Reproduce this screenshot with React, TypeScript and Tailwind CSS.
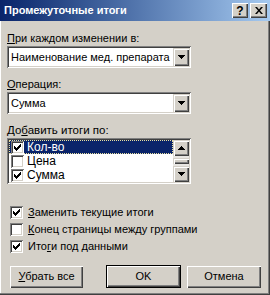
import React from "react";

const sunken =
  "shadow-[inset_1px_1px_0_#808080,inset_-1px_-1px_0_#ffffff,inset_2px_2px_0_#404040,inset_-2px_-2px_0_#d4d0c8]";
const raised =
  "shadow-[inset_1px_1px_0_#ffffff,inset_-1px_-1px_0_#404040,inset_-2px_-2px_0_#808080]";
const raisedCombo =
  "shadow-[inset_1px_1px_0_#d4d0c8,inset_2px_2px_0_#ffffff,inset_-1px_-1px_0_#404040,inset_-2px_-2px_0_#808080]";

function Check({ on }: { on: boolean }) {
  return (
    <div className={`w-[13px] h-[13px] bg-white shrink-0 relative ${sunken}`}>
      {on && (
        <svg className="absolute left-[3px] top-[3px]" width="7" height="7" viewBox="0 0 7 7">
          <path d="M0 2h1v1h1v1h1v-1h1v-1h1v-1h1v-1h1v3h-1v1h-1v1h-1v1h-1v1h-1v-1h-1v-1h-1z" fill="#000" />
        </svg>
      )}
    </div>
  );
}

function ArrowDown() {
  return (
    <svg width="7" height="4" viewBox="0 0 7 4">
      <path d="M0 0h7v1h-1v1h-1v1h-1v1h-1v-1h-1v-1h-1v-1h-1z" fill="#000" />
    </svg>
  );
}
function ArrowUp() {
  return (
    <svg width="7" height="4" viewBox="0 0 7 4">
      <path d="M3 0h1v1h1v1h1v1h1v1h-7v-1h1v-1h1v-1h1z" fill="#000" />
    </svg>
  );
}

function Combo({ text }: { text: string }) {
  return (
    <div className={`w-[184px] h-[22px] bg-white flex items-center ${sunken} pl-[4px] pr-[2px]`}>
      <span className="flex-1 leading-none">{text}</span>
      <div className={`w-[16px] h-[18px] bg-[#d4d0c8] flex items-center justify-center ${raisedCombo}`}>
        <ArrowDown />
      </div>
    </div>
  );
}

function U({ c }: { c: string }) {
  return <span className="underline underline-offset-[1px]">{c}</span>;
}

export default function App() {
  return (
    <div
      className="w-[270px] h-[295px] bg-[#d4d0c8] relative overflow-hidden text-[11px] text-black shadow-[inset_-1px_-1px_0_#404040,inset_-2px_-2px_0_#808080,inset_1px_0_0_#ffffff]"
      style={{ fontFamily: '"Liberation Sans", Arial, sans-serif' }}
    >
      {/* title bar */}
      <div className="h-[21px] bg-gradient-to-r from-[#0a246a] to-[#a6caf0] flex items-center pl-[4px] pr-[3px]">
        <span className="flex-1 text-white font-bold text-[11px] leading-none">Промежуточные итоги</span>
        <div className={`w-[16px] h-[15px] bg-[#d4d0c8] flex items-center justify-center font-bold text-[12px] leading-none ${raised}`}>
          ?
        </div>
        <div className={`ml-[2px] w-[17px] h-[15px] bg-[#d4d0c8] flex items-center justify-center ${raised}`}>
          <svg width="8" height="7" viewBox="0 0 8 7">
            <path d="M0 0h2l2 2.5 2-2.5h2l-3 3.5 3 3.5h-2l-2-2.5-2 2.5h-2l3-3.5z" fill="#000" />
          </svg>
        </div>
      </div>

      <div className="pl-[7px] flex flex-col">
        <div className="mt-[11px] h-[13px] leading-[13px]">
          <U c="П" />ри каждом изменении в:
        </div>
        <div className="mt-[1px]">
          <Combo text="Наименование мед. препарата" />
        </div>
        <div className="mt-[10px] h-[13px] leading-[13px]">
          <U c="О" />перация:
        </div>
        <div className="mt-[1px]">
          <Combo text="Сумма" />
        </div>
        <div className="mt-[10px] h-[13px] leading-[13px] text-[11.5px]">
          До<U c="б" />авить итоги по:
        </div>
        <div className={`mt-[1px] w-[184px] h-[46px] bg-white flex p-[2px] ${sunken}`}>
          <div className="flex-1 flex flex-col text-[12px]">
            <div className="h-[14px] flex items-center pl-[2px] bg-[#0a246a] text-white outline-1 outline-dotted outline-[#e8e0a0] -outline-offset-1">
              <Check on={true} />
              <span className="ml-[3px] leading-none">Кол-во</span>
            </div>
            <div className="h-[14px] flex items-center pl-[2px]">
              <Check on={false} />
              <span className="ml-[3px] leading-none">Цена</span>
            </div>
            <div className="h-[14px] flex items-center pl-[2px]">
              <Check on={true} />
              <span className="ml-[3px] leading-none">Сумма</span>
            </div>
          </div>
          <div className="w-[16px] flex flex-col bg-[#e8e6e2]">
            <div className={`h-[16px] bg-[#d4d0c8] flex items-center justify-center ${raisedCombo}`}>
              <ArrowUp />
            </div>
            <div className={`mt-[2px] h-[6px] bg-[#d4d0c8] ${raisedCombo}`} />
            <div className="flex-1" />
            <div className={`h-[16px] bg-[#d4d0c8] flex items-center justify-center ${raisedCombo}`}>
              <ArrowDown />
            </div>
          </div>
        </div>

        <div className="mt-[22px] pl-[3px] flex flex-col gap-[4px]">
          <div className="h-[13px] flex items-center">
            <Check on={true} />
            <span className="ml-[5px] leading-none">
              <U c="З" />аменить текущие итоги
            </span>
          </div>
          <div className="h-[13px] flex items-center">
            <Check on={false} />
            <span className="ml-[5px] leading-none">
              <U c="К" />онец страницы между группами
            </span>
          </div>
          <div className="h-[13px] flex items-center">
            <Check on={true} />
            <span className="ml-[5px] leading-none">
              Ито<U c="г" />и под данными
            </span>
          </div>
        </div>

        <div className="mt-[12px] flex items-center">
          <div className={`ml-[3px] w-[73px] h-[22px] bg-[#d4d0c8] flex items-center justify-center ${raised}`}>
            <span>
              <U c="У" />брать все
            </span>
          </div>
          <div className="ml-[23px] w-[75px] h-[23px] border border-black">
            <div className={`w-full h-full bg-[#d4d0c8] flex items-center justify-center ${raised}`}>OK</div>
          </div>
          <div className={`ml-[6px] w-[74px] h-[22px] bg-[#d4d0c8] flex items-center justify-center ${raised}`}>
            Отмена
          </div>
        </div>
      </div>
    </div>
  );
}
